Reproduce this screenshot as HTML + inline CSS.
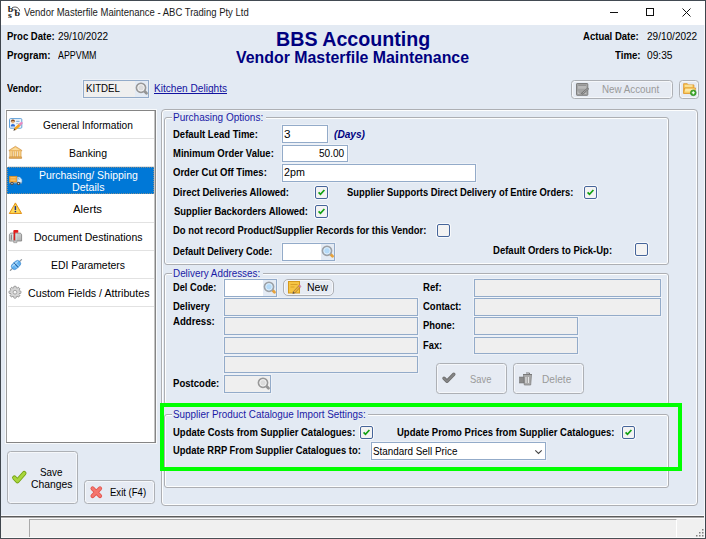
<!DOCTYPE html>
<html><head><meta charset="utf-8"><title>Vendor Masterfile Maintenance - ABC Trading Pty Ltd</title>
<style>
html,body{margin:0;padding:0;}
body{width:706px;height:539px;overflow:hidden;position:relative;background:#e3eaf3;font-family:"Liberation Sans",sans-serif;font-size:10.67px;color:#000;}
.a{position:absolute;box-sizing:border-box;}
.t{position:absolute;white-space:pre;transform-origin:0 50%;display:block;}
.inp{position:absolute;box-sizing:border-box;background:#fff;border:1px solid #93abc9;box-shadow:0 0 0 1px rgba(255,255,255,.35);}
.dis{background:#efefef;}
.cb{position:absolute;box-sizing:border-box;width:13px;height:13px;border:1px solid #45659a;border-radius:2px;background:#f3f3f3;box-shadow:0 0 0 1px rgba(255,255,255,.7);}
.grp{position:absolute;box-sizing:border-box;border:1px solid #adafb3;border-radius:3px;box-shadow:inset 0 0 0 1px rgba(255,255,255,.92);}
.leg{position:absolute;background:#e3eaf3;height:4px;}
.btn{position:absolute;box-sizing:border-box;border:1px solid #adb0b5;border-radius:3.500px;background:#e6ebf3;box-shadow:inset 0 0 0 1px rgba(255,255,255,.6);}
.row{position:absolute;left:8px;width:146px;height:1px;background:#e2e2e2;}
svg{position:absolute;overflow:visible;}
</style></head><body>
<!-- title bar -->
<div class="a" style="left:0;top:0;width:706px;height:25px;background:#fff;"></div>
<div class="a" style="left:0;top:0;width:706px;height:1px;background:#424a52;"></div>
<div class="a" style="left:0;top:0;width:1px;height:539px;background:#3f464d;"></div>
<div class="a" style="left:705px;top:0;width:1px;height:539px;background:#3f464d;"></div>
<div class="a" style="left:704px;top:25px;width:1px;height:491px;background:#f3f6fa;"></div>
<!-- app icon -->
<svg style="left:7px;top:5.700px" width="15" height="15" viewBox="0 0 15 15"><g font-family="Liberation Serif,serif" font-weight="bold" fill="#1a1a1a"><text transform="translate(0.800 6.400) scale(1.250 1)" font-size="8">b</text><text transform="translate(7.600 10.100) scale(1.250 1)" font-size="8">b</text><text transform="translate(1 12.400) scale(1.350 1)" font-size="7.400">s</text></g><path d="M5 1.900C8 0 12.200 1.400 12.700 5.200M6.200 4.100C8 3.200 9.400 3.700 10 4.700" fill="none" stroke="#2a2a2a" stroke-width=".800"/></svg>
<!-- caption buttons -->
<div class="a" style="left:610px;top:12px;width:8px;height:1px;background:#111;"></div>
<div class="a" style="left:646px;top:8px;width:8px;height:8px;border:1px solid #111;"></div>
<svg style="left:682px;top:8px" width="9" height="9" viewBox="0 0 9 9"><path d="M0.5 0.5L8.5 8.5M8.5 0.5L0.5 8.5" stroke="#111" stroke-width="1" fill="none"/></svg>

<!-- vendor input -->
<div class="inp dis" style="left:83px;top:80px;width:66px;height:18px;"></div>
<div class="a" style="left:135px;top:81px;width:13px;height:16px;background:#e4ebf4;"></div>
<svg style="left:135px;top:82px" width="14" height="14" viewBox="0 0 14 14"><path d="M9.800 9.600L11.500 11.300" stroke="#959595" stroke-width="2.800" stroke-linecap="round"/><circle cx="6" cy="5.800" r="4.500" fill="#dcdcdc" stroke="#989898" stroke-width="1.800"/><circle cx="6" cy="5.800" r="3.200" fill="none" stroke="#f4f4f4" stroke-width=".900"/></svg>

<!-- New Account button -->
<div class="btn" style="left:571px;top:80px;width:102px;height:19px;"></div>
<svg style="left:576px;top:83px" width="13" height="13" viewBox="0 0 13 13"><rect x="0.500" y="0.500" width="11.300" height="11.800" rx=".600" fill="#a3a3a3" stroke="#7f7f7f"/><rect x="2" y="2" width="8.300" height="3.700" fill="#b9b9b9"/><path d="M2.200 2.400h7.900" stroke="#8a8a8a" stroke-width=".900"/><path d="M2 8.500v2h1.500M10.300 10.500H8.800" stroke="#c9c9c9" stroke-width=".800" fill="none"/><path d="M5.600 11.100L12.400 5.300" stroke="#6e6e6e" stroke-width="2"/><path d="M6.400 10.400L12 5.700" stroke="#c4c4c4" stroke-width=".700"/></svg>
<div class="btn" style="left:679px;top:80px;width:20px;height:19px;"></div>
<svg style="left:682.500px;top:82.600px" width="14" height="13" viewBox="0 0 14 13"><path d="M0.600 0.700h3.700l1 1.200h5.600v8.400H0.600z" fill="#f4c24f" stroke="#df962a" stroke-width=".800" stroke-linejoin="round"/><path d="M1.700 2.400h7.800M1.700 3.700h7.800" stroke="#fdeeb5" stroke-width=".800"/><path d="M1.600 5h11.100l-1.600 5.300H0.600z" fill="#fbd772" stroke="#df962a" stroke-width=".800" stroke-linejoin="round"/><path d="M2.400 6.300h8.600M2 7.800h8" stroke="#fef3c6" stroke-width=".800"/><circle cx="10.300" cy="9.800" r="2.900" fill="#3aa82a" stroke="#2a8a1e" stroke-width=".600"/><path d="M10.300 8.300v3M8.800 9.800h3" stroke="#fff" stroke-width="1.100"/></svg>

<!-- left list -->
<div class="a" style="left:6px;top:110px;width:150px;height:333px;background:#fff;border:1px solid #858585;border-left-color:#9c9c9c;box-shadow:0 0 0 1px rgba(255,255,255,.75), inset -1px 0 0 #c4c4c4;"></div>
<div class="row" style="top:138px"></div>
<div class="row" style="top:166px"></div>
<div class="a" style="left:7px;top:167px;width:147px;height:27px;background:#0078d7;border:1px dotted rgba(214,160,100,.6);"></div>
<div class="row" style="top:222px"></div>
<div class="row" style="top:250px"></div>
<div class="row" style="top:278px"></div>
<div class="row" style="top:306px"></div>
<!-- list icons -->
<svg style="left:9px;top:118px" width="14" height="14" viewBox="0 0 14 14"><rect x="0.500" y="0.600" width="12.300" height="9.600" rx="1" fill="#eef5fc" stroke="#5f9fd8" stroke-width="1"/><circle cx="3.900" cy="3.700" r="1.700" fill="#ecba86"/><path d="M2.100 3.500a1.800 1.800 0 0 1 3.600 0c-.6-1-3-1-3.600 0z" fill="#7a3f14" stroke="#7a3f14" stroke-width=".500"/><path d="M1.700 8.400C1.700 5.300 6.100 5.300 6.100 8.400z" fill="#2f6fd6"/><path d="M7.200 3.300h3.300" stroke="#6f9fd0" stroke-width="1"/><path d="M7.200 5.600h2.400" stroke="#aab4be" stroke-width=".800"/><path d="M5.800 11.200L11 6.500" stroke="#f5a21e" stroke-width="2.500"/><path d="M5.200 10.500l1.500 1.600-2.300.700z" fill="#3a2a1a"/><path d="M10.500 7l1-.900" stroke="#b9bec4" stroke-width="2.500"/><path d="M11.300 6.200l1.200-1.100" stroke="#e889c2" stroke-width="2.500" stroke-linecap="round"/></svg>
<svg style="left:9px;top:146px" width="13" height="13" viewBox="0 0 13 13"><path d="M6.400 0.300L12.700 4.200V5.100H0.200V4.200z" fill="#f6c673" stroke="#c8883a" stroke-width=".600" stroke-linejoin="round"/><path d="M6.400 1.600L10.400 4.100H2.400z" fill="#fbdc9c"/><rect x="0.700" y="5.100" width="11.500" height="5.800" fill="#f5c36c"/><path d="M1.900 5.300v5.400M6.400 5.300v5.400M10.900 5.300v5.400" stroke="#fbe0a8" stroke-width="1"/><path d="M4.200 5.400v5.400M8.400 5.400v5.400" stroke="#fff" stroke-width="1.100"/><path d="M0.800 5.200v5.600M3.500 5.300v5.500M4.900 5.300v5.500M7.700 5.300v5.500M9.100 5.300v5.500M12 5.200v5.600" stroke="#cf9243" stroke-width=".500"/><path d="M0.300 10.900h12.300v1.500H0.300z" fill="#eeb55c" stroke="#c07f33" stroke-width=".600"/></svg>
<svg style="left:9px;top:176px" width="14" height="10" viewBox="0 0 14 10"><rect x="0.300" y="0.200" width="7.700" height="6.100" fill="#f5a32c" stroke="#e08a14" stroke-width=".500"/><path d="M1.500 1.500h5.200M1.500 3.100h5.200M1.500 4.600h5.200" stroke="#fbc876" stroke-width=".800"/><path d="M8.300 1.200h2.600l1.900 2.400v2.700H8.300z" fill="#dceefb" stroke="#9cc0e2" stroke-width=".500"/><path d="M9.200 1.900h1.500l1.300 1.700H9.200z" fill="#6fb2ee"/><path d="M10 1.700l1.600 2" stroke="#fff" stroke-width=".700"/><rect x="0.300" y="6.300" width="12.600" height="1.100" fill="#aab3bd"/><circle cx="3" cy="7.500" r="1.700" fill="#4a4a4a"/><circle cx="3" cy="7.500" r=".700" fill="#d8d8d8"/><circle cx="9.500" cy="7.500" r="1.700" fill="#4a4a4a"/><circle cx="9.500" cy="7.500" r=".700" fill="#d8d8d8"/></svg>
<svg style="left:9px;top:202.400px" width="14" height="12" viewBox="0 0 14 12"><path d="M6.400 0.900L12.600 11.500H0.300z" fill="#fbd03c" stroke="#e2921c" stroke-width="1" stroke-linejoin="round"/><path d="M6.400 3L10.800 10.500H2z" fill="#fde27a" opacity=".55"/><path d="M6.400 4.100v3.900" stroke="#1f2f80" stroke-width="1.500"/><circle cx="6.400" cy="9.500" r=".850" fill="#1f2f80"/></svg>
<svg style="left:9px;top:229px" width="14" height="15" viewBox="0 0 14 15"><defs><linearGradient id="mb" x1="0" y1="0" x2="1" y2="1"><stop offset="0" stop-color="#e6e6e6"/><stop offset="1" stop-color="#aeaeae"/></linearGradient></defs><path d="M0.400 12V6c0-1.100.900-1.900 1.900-1.900h8.400c1.100 0 1.900.900 1.900 1.900v6z" fill="url(#mb)" stroke="#7e7e7e" stroke-width=".800"/><path d="M2.300 5.600v5.200" stroke="#6e6e6e" stroke-width=".900"/><path d="M3.700 4.600v7M7.100 4.600v7" stroke="#c9eef0" stroke-width=".800"/><path d="M4.700 12v1.700h3.200V12" fill="#c4c4c4" stroke="#8a8a8a" stroke-width=".600"/><path d="M5.400 1.500v9.700" stroke="#d61f1f" stroke-width="1.700"/><rect x="4.600" y="0.900" width="4.700" height="2.900" rx=".800" fill="#e21d1d"/></svg>
<svg style="left:10px;top:259px" width="12" height="12" viewBox="0 0 12 12"><path d="M0.400 11.400L2.600 9.300M9.300 2.700l2.200-2.100" stroke="#8e979f" stroke-width="1.300" stroke-linecap="round"/><g transform="rotate(-42 6 6)"><rect x="0.900" y="2.900" width="10.200" height="6.200" rx="3.100" fill="#5fb0f0" stroke="#3f8ad0" stroke-width=".700"/><path d="M2.600 4.400h6.800" stroke="#b5defb" stroke-width="1.100" stroke-linecap="round"/><path d="M4.500 3.100v5.800M7.500 3.100v5.800" stroke="#a5d5f8" stroke-width=".700"/><path d="M6 2.900v6.200" stroke="#2f5f95" stroke-width=".900"/></g></svg>
<svg style="left:9px;top:286px" width="12" height="12" viewBox="0 0 12 12"><g transform="translate(6 6.200)"><g fill="#cfcfcf" stroke="#7e7e7e" stroke-width=".800"><rect x="-1.200" y="-5.900" width="2.400" height="11.800" rx=".500" transform="rotate(0)"/><rect x="-1.200" y="-5.900" width="2.400" height="11.800" rx=".500" transform="rotate(45)"/><rect x="-1.200" y="-5.900" width="2.400" height="11.800" rx=".500" transform="rotate(90)"/><rect x="-1.200" y="-5.900" width="2.400" height="11.800" rx=".500" transform="rotate(135)"/></g><circle r="4.300" fill="#dadada" stroke="#8e8e8e" stroke-width=".600"/><circle r="4" fill="#d6d6d6"/><g fill="#d6d6d6"><rect x="-.800" y="-5.400" width="1.600" height="10.800" transform="rotate(0)"/><rect x="-.800" y="-5.400" width="1.600" height="10.800" transform="rotate(45)"/><rect x="-.800" y="-5.400" width="1.600" height="10.800" transform="rotate(90)"/><rect x="-.800" y="-5.400" width="1.600" height="10.800" transform="rotate(135)"/></g><circle r="1.900" fill="#f4f4f4" stroke="#8a8a8a" stroke-width=".700"/></g></svg>

<!-- bottom-left buttons -->
<div class="btn" style="left:7px;top:451px;width:71px;height:53px;"></div>
<svg style="left:12px;top:470px" width="15" height="15" viewBox="0 0 15 15"><path d="M2.400 7.700L5.400 11 12.200 3.300" fill="none" stroke="#76a317" stroke-width="4.600" stroke-linecap="round" stroke-linejoin="round"/><path d="M2.400 7.700L5.400 11 12.200 3.300" fill="none" stroke="#a9d63c" stroke-width="2.800" stroke-linecap="round" stroke-linejoin="round"/></svg>
<div class="btn" style="left:84px;top:480px;width:71px;height:24px;"></div>
<svg style="left:90px;top:486px" width="13" height="13" viewBox="0 0 13 13"><path d="M2.600 2.500L10 9.900M10 2.500L2.600 9.900" fill="none" stroke="#e2534b" stroke-width="4.200" stroke-linecap="round"/><path d="M2.600 2.500L10 9.900M10 2.500L2.600 9.900" fill="none" stroke="#f4766e" stroke-width="2.600" stroke-linecap="round"/></svg>

<!-- right outer panel -->
<div class="grp" style="left:161px;top:109px;width:537px;height:397px;border-radius:4px;"></div>

<!-- group 1 -->
<div class="grp" style="left:164px;top:117px;width:505px;height:148px;"></div>
<div class="leg" style="left:172px;top:115px;width:94px;"></div>
<div class="inp" style="left:282px;top:125px;width:46px;height:18px;"></div>
<div class="inp" style="left:282px;top:145px;width:66px;height:17px;"></div>
<div class="inp" style="left:282px;top:164px;width:194px;height:18px;"></div>
<div class="cb" style="left:315px;top:186px;"></div>
<div class="cb" style="left:584px;top:186px;"></div>
<div class="cb" style="left:315px;top:205px;"></div>
<div class="cb" style="left:437px;top:224px;"></div>
<div class="cb" style="left:635px;top:243px;"></div>
<div class="inp" style="left:282px;top:243px;width:53px;height:18px;"></div>
<div class="a" style="left:321px;top:244px;width:13px;height:16px;background:#e4ebf4;"></div>
<svg style="left:321px;top:245px" width="14" height="14" viewBox="0 0 14 14"><path d="M9.800 9.600L11.500 11.300" stroke="#e6a23c" stroke-width="2.800" stroke-linecap="round"/><circle cx="6" cy="5.800" r="4.500" fill="#b4daf8" stroke="#9da1a6" stroke-width="1.800"/><circle cx="6" cy="5.800" r="3.200" fill="none" stroke="#e3f1fc" stroke-width=".900"/></svg>
<!-- checks -->
<svg style="left:318px;top:189px" width="7" height="7" viewBox="0 0 7 7"><path d="M0.600 3.300L2.500 5.300 6.400 1" stroke="#12a112" stroke-width="1.700" fill="none"/></svg>
<svg style="left:587px;top:189px" width="7" height="7" viewBox="0 0 7 7"><path d="M0.600 3.300L2.500 5.300 6.400 1" stroke="#12a112" stroke-width="1.700" fill="none"/></svg>
<svg style="left:318px;top:208px" width="7" height="7" viewBox="0 0 7 7"><path d="M0.600 3.300L2.500 5.300 6.400 1" stroke="#12a112" stroke-width="1.700" fill="none"/></svg>

<!-- group 2 -->
<div class="grp" style="left:164px;top:273px;width:505px;height:132px;"></div>
<div class="leg" style="left:172px;top:271px;width:91px;"></div>
<div class="inp" style="left:224px;top:279px;width:53px;height:18px;"></div>
<div class="a" style="left:263px;top:280px;width:13px;height:16px;background:#e4ebf4;"></div>
<svg style="left:263px;top:281px" width="14" height="14" viewBox="0 0 14 14"><path d="M9.800 9.600L11.500 11.300" stroke="#e6a23c" stroke-width="2.800" stroke-linecap="round"/><circle cx="6" cy="5.800" r="4.500" fill="#b4daf8" stroke="#9da1a6" stroke-width="1.800"/><circle cx="6" cy="5.800" r="3.200" fill="none" stroke="#e3f1fc" stroke-width=".900"/></svg>
<div class="btn" style="left:283px;top:279px;width:51px;height:17px;border-radius:5px;"></div>
<svg style="left:288px;top:281px" width="14" height="13" viewBox="0 0 14 13"><rect x="0.500" y="0.500" width="11" height="11.500" fill="#f6c544" stroke="#d59a1f"/><path d="M2.500 3.500h7M2.500 6h4" stroke="#d9a12a"/><path d="M5.300 10.600L10.600 5l1.500 1.400L6.800 12l-2 .6z" fill="#f2b33a" stroke="#8a6a3a" stroke-width=".6"/><path d="M10.600 5l1-1.100 1.500 1.400-1 1.100z" fill="#ea86b8" stroke="#a85a86" stroke-width=".4"/><path d="M4.800 12.600l.5-2 1.500 1.400z" fill="#555"/></svg>
<div class="inp dis" style="left:224px;top:298px;width:194px;height:18px;"></div>
<div class="inp dis" style="left:224px;top:317px;width:194px;height:18px;"></div>
<div class="inp dis" style="left:224px;top:337px;width:194px;height:17px;"></div>
<div class="inp dis" style="left:224px;top:356px;width:194px;height:17px;"></div>
<div class="inp dis" style="left:224px;top:375px;width:47px;height:18px;"></div>
<svg style="left:257px;top:377px" width="14" height="14" viewBox="0 0 14 14"><path d="M9.800 9.600L11.500 11.300" stroke="#959595" stroke-width="2.800" stroke-linecap="round"/><circle cx="6" cy="5.800" r="4.500" fill="#dcdcdc" stroke="#989898" stroke-width="1.800"/><circle cx="6" cy="5.800" r="3.200" fill="none" stroke="#f4f4f4" stroke-width=".900"/></svg>
<div class="inp dis" style="left:474px;top:279px;width:187px;height:18px;"></div>
<div class="inp dis" style="left:474px;top:298px;width:187px;height:18px;"></div>
<div class="inp dis" style="left:474px;top:317px;width:104px;height:18px;"></div>
<div class="inp dis" style="left:474px;top:337px;width:104px;height:17px;"></div>
<div class="btn" style="left:436px;top:363px;width:71px;height:31px;"></div>
<svg style="left:442px;top:372px" width="14" height="12" viewBox="0 0 14 12"><path d="M2 6.300L5 9.300 11.800 2.300" fill="none" stroke="#6f6f6f" stroke-width="3.400" stroke-linecap="round" stroke-linejoin="round"/><path d="M2 6.300L5 9.300 11.800 2.300" fill="none" stroke="#858585" stroke-width="1.800" stroke-linecap="round" stroke-linejoin="round"/></svg>
<div class="btn" style="left:513px;top:363px;width:71px;height:31px;"></div>
<svg style="left:519px;top:371.500px" width="14" height="14" viewBox="0 0 14 14"><path d="M4.500 2.500h8l-.8 10.500H5.300z" fill="#a9a9a9" stroke="#7a7a7a" stroke-width=".7"/><path d="M4 2.500h9M7 1h3.500v1.500" stroke="#7a7a7a" fill="none"/><path d="M7 5v6M9.500 5v6" stroke="#e6e6e6"/><rect x="0.500" y="5" width="4.500" height="6" fill="#8a8a8a" stroke="#6a6a6a" stroke-width=".5"/></svg>

<!-- group 3 -->
<div class="grp" style="left:164px;top:414px;width:505px;height:74px;"></div>
<div class="leg" style="left:172px;top:412px;width:196px;"></div>
<div class="cb" style="left:360px;top:426px;"></div>
<div class="cb" style="left:622px;top:426px;"></div>
<svg style="left:363px;top:429px" width="7" height="7" viewBox="0 0 7 7"><path d="M0.600 3.300L2.500 5.300 6.400 1" stroke="#12a112" stroke-width="1.700" fill="none"/></svg>
<svg style="left:625px;top:429px" width="7" height="7" viewBox="0 0 7 7"><path d="M0.600 3.300L2.500 5.300 6.400 1" stroke="#12a112" stroke-width="1.700" fill="none"/></svg>
<div class="inp" style="left:371px;top:442px;width:175px;height:18px;"></div>
<svg style="left:535px;top:449.800px" width="7" height="4" viewBox="0 0 7 4"><path d="M0.300 0.300L3.500 3.500 6.700 0.300" stroke="#444" stroke-width="1.100" fill="none"/></svg>

<!-- green highlight -->
<div class="a" style="left:160px;top:403px;width:522px;height:68px;border:4px solid #00ff00;"></div>

<!-- status bar -->
<div class="a" style="left:1px;top:515px;width:704px;height:1px;background:#f9fafc;"></div>
<div class="a" style="left:1px;top:516px;width:704px;height:1px;background:#5c5c5c;"></div>
<div class="a" style="left:1px;top:517px;width:704px;height:1px;background:#a9a9a9;"></div>
<div class="a" style="left:1px;top:518px;width:704px;height:20px;background:#f0f0f0;"></div>
<div class="a" style="left:1px;top:518px;width:704px;height:1px;background:#fbfbfb;"></div>
<div class="a" style="left:1px;top:537px;width:704px;height:1px;background:#fafafa;"></div>
<div class="a" style="left:29px;top:519px;width:648px;height:18px;border-top:1px solid #a9a9a9;border-left:1px solid #a9a9a9;border-right:1px solid #fff;"></div>
<div class="a" style="left:704px;top:25px;width:1px;height:513px;background:#f6f8fb;"></div>
<svg style="left:694.600px;top:527.600px" width="10" height="10" viewBox="0 0 10 10"><g fill="#7f7f7f"><rect x="7" y="1" width="1.500" height="1.500"/><rect x="4" y="4" width="1.500" height="1.500"/><rect x="7" y="4" width="1.500" height="1.500"/><rect x="1" y="7" width="1.500" height="1.500"/><rect x="4" y="7" width="1.500" height="1.500"/><rect x="7" y="7" width="1.500" height="1.500"/></g></svg>
<div class="a" style="left:0;top:538px;width:706px;height:1px;background:#4a4f55;"></div>

<span class="t" style="left:23.7px;top:5.5px;line-height:14px;font-size:10px;transform:scaleX(0.9489);color:#1a1a1a;">Vendor Masterfile Maintenance - ABC Trading Pty Ltd</span>
<span class="t" style="left:6.9px;top:29.5px;line-height:14px;font-size:10.0px;transform:scaleX(0.9537);font-weight:bold;">Proc Date:</span>
<span class="t" style="left:57.9px;top:29.5px;line-height:14px;font-size:10.0px;transform:scaleX(0.9988);">29/10/2022</span>
<span class="t" style="left:6.9px;top:48.5px;line-height:14px;font-size:10.0px;transform:scaleX(0.9786);font-weight:bold;">Program:</span>
<span class="t" style="left:57.9px;top:48.5px;line-height:14px;font-size:10.0px;transform:scaleX(0.8882);">APPVMM</span>
<span class="t" style="left:6.9px;top:81.5px;line-height:14px;font-size:10.0px;transform:scaleX(0.9400);font-weight:bold;">Vendor:</span>
<span class="t" style="left:86.0px;top:81.5px;line-height:14px;font-size:10.0px;transform:scaleX(0.9710);">KITDEL</span>
<span class="t" style="left:153.9px;top:81.5px;line-height:14px;font-size:10.0px;transform:scaleX(1.0102);color:#1212a0;text-decoration:underline;text-decoration-thickness:1px;text-decoration-skip-ink:none;text-underline-offset:1px;">Kitchen Delights</span>
<span class="t" style="left:276.3px;top:26.7px;line-height:25px;font-size:19.5px;transform:scaleX(1.0078);font-weight:bold;color:#000080;">BBS Accounting</span>
<span class="t" style="left:236.4px;top:47.0px;line-height:21px;font-size:16px;transform:scaleX(0.9926);font-weight:bold;color:#000080;">Vendor Masterfile Maintenance</span>
<span class="t" style="left:582.6px;top:29.5px;line-height:14px;font-size:10.0px;transform:scaleX(0.9561);font-weight:bold;">Actual Date:</span>
<span class="t" style="left:646.9px;top:29.5px;line-height:14px;font-size:10.0px;transform:scaleX(1.0027);">29/10/2022</span>
<span class="t" style="left:614.9px;top:48.5px;line-height:14px;font-size:10.0px;transform:scaleX(0.9623);font-weight:bold;">Time:</span>
<span class="t" style="left:646.9px;top:48.5px;line-height:14px;font-size:10.0px;transform:scaleX(1.0187);">09:35</span>
<span class="t" style="left:601.9px;top:81.8px;line-height:15px;font-size:10.67px;transform:scaleX(0.9196);color:#9a9a9a;">New Account</span>
<span class="t" style="left:42.9px;top:117.1px;line-height:16px;font-size:11.3px;transform:scaleX(0.9004);">General Information</span>
<span class="t" style="left:68.9px;top:145.1px;line-height:16px;font-size:11.3px;transform:scaleX(0.9307);">Banking</span>
<span class="t" style="left:39.1px;top:167.1px;line-height:16px;font-size:11.3px;transform:scaleX(0.9254);color:#fff;">Purchasing/ Shipping</span>
<span class="t" style="left:71.9px;top:179.1px;line-height:16px;font-size:11.3px;transform:scaleX(0.9412);color:#fff;">Details</span>
<span class="t" style="left:72.9px;top:201.1px;line-height:16px;font-size:11.3px;transform:scaleX(1.0038);">Alerts</span>
<span class="t" style="left:33.9px;top:229.1px;line-height:16px;font-size:11.3px;transform:scaleX(0.9290);">Document Destinations</span>
<span class="t" style="left:50.9px;top:257.1px;line-height:16px;font-size:11.3px;transform:scaleX(0.9209);">EDI Parameters</span>
<span class="t" style="left:27.6px;top:285.1px;line-height:16px;font-size:11.3px;transform:scaleX(0.9439);">Custom Fields / Attributes</span>
<span class="t" style="left:173.2px;top:110.5px;line-height:14px;font-size:10.0px;transform:scaleX(1.0015);color:#1a1aa6;">Purchasing Options:</span>
<span class="t" style="left:173.1px;top:127.5px;line-height:14px;font-size:10.0px;transform:scaleX(0.9498);font-weight:bold;">Default Lead Time:</span>
<span class="t" style="left:284.4px;top:127.5px;line-height:14px;font-size:10.0px;transform:scaleX(1.1685);">3</span>
<span class="t" style="left:333.5px;top:127.5px;line-height:14px;font-size:10.0px;transform:scaleX(1.0138);font-weight:bold;color:#000080;font-style:italic;">(Days)</span>
<span class="t" style="left:173.1px;top:146.5px;line-height:14px;font-size:10.0px;transform:scaleX(0.9497);font-weight:bold;">Minimum Order Value:</span>
<span class="t" style="left:319.2px;top:146.5px;line-height:14px;font-size:10.0px;transform:scaleX(1.0067);">50.00</span>
<span class="t" style="left:173.1px;top:165.5px;line-height:14px;font-size:10.0px;transform:scaleX(0.9502);font-weight:bold;">Order Cut Off Times:</span>
<span class="t" style="left:284.4px;top:165.5px;line-height:14px;font-size:10.0px;transform:scaleX(1.0692);">2pm</span>
<span class="t" style="left:173.1px;top:185.5px;line-height:14px;font-size:10.0px;transform:scaleX(0.9473);font-weight:bold;">Direct Deliveries Allowed:</span>
<span class="t" style="left:347.1px;top:185.5px;line-height:14px;font-size:10.0px;transform:scaleX(0.9362);font-weight:bold;">Supplier Supports Direct Delivery of Entire Orders:</span>
<span class="t" style="left:174.4px;top:204.5px;line-height:14px;font-size:10.0px;transform:scaleX(0.9444);font-weight:bold;">Supplier Backorders Allowed:</span>
<span class="t" style="left:173.1px;top:223.5px;line-height:14px;font-size:10.0px;transform:scaleX(0.9439);font-weight:bold;">Do not record Product/Supplier Records for this Vendor:</span>
<span class="t" style="left:173.1px;top:244.5px;line-height:14px;font-size:10.0px;transform:scaleX(0.9306);font-weight:bold;">Default Delivery Code:</span>
<span class="t" style="left:493.0px;top:243.5px;line-height:14px;font-size:10.0px;transform:scaleX(0.9526);font-weight:bold;">Default Orders to Pick-Up:</span>
<span class="t" style="left:173.2px;top:266.5px;line-height:14px;font-size:10.0px;transform:scaleX(0.9867);color:#1a1aa6;">Delivery Addresses:</span>
<span class="t" style="left:173.1px;top:280.5px;line-height:14px;font-size:10.0px;transform:scaleX(0.9278);font-weight:bold;">Del Code:</span>
<span class="t" style="left:307.0px;top:279.8px;line-height:15px;font-size:10.67px;transform:scaleX(0.9846);">New</span>
<span class="t" style="left:173.1px;top:299.5px;line-height:14px;font-size:10.0px;transform:scaleX(0.9455);font-weight:bold;">Delivery</span>
<span class="t" style="left:173.1px;top:314.5px;line-height:14px;font-size:10.0px;transform:scaleX(0.9640);font-weight:bold;">Address:</span>
<span class="t" style="left:173.1px;top:376.5px;line-height:14px;font-size:10.0px;transform:scaleX(0.9577);font-weight:bold;">Postcode:</span>
<span class="t" style="left:422.8px;top:280.5px;line-height:14px;font-size:10.0px;transform:scaleX(0.9561);font-weight:bold;">Ref:</span>
<span class="t" style="left:422.9px;top:299.5px;line-height:14px;font-size:10.0px;transform:scaleX(0.9492);font-weight:bold;">Contact:</span>
<span class="t" style="left:422.9px;top:318.5px;line-height:14px;font-size:10.0px;transform:scaleX(0.9442);font-weight:bold;">Phone:</span>
<span class="t" style="left:422.9px;top:338.5px;line-height:14px;font-size:10.0px;transform:scaleX(0.9337);font-weight:bold;">Fax:</span>
<span class="t" style="left:469.8px;top:371.8px;line-height:15px;font-size:10.67px;transform:scaleX(0.8808);color:#9a9a9a;">Save</span>
<span class="t" style="left:542.1px;top:371.8px;line-height:15px;font-size:10.67px;transform:scaleX(0.9509);color:#9a9a9a;">Delete</span>
<span class="t" style="left:173.2px;top:407.5px;line-height:14px;font-size:10.0px;transform:scaleX(0.9877);color:#1a1aa6;">Supplier Product Catalogue Import Settings:</span>
<span class="t" style="left:173.1px;top:425.5px;line-height:14px;font-size:10.0px;transform:scaleX(0.9482);font-weight:bold;">Update Costs from Supplier Catalogues:</span>
<span class="t" style="left:397.4px;top:425.5px;line-height:14px;font-size:10.0px;transform:scaleX(0.9500);font-weight:bold;">Update Promo Prices from Supplier Catalogues:</span>
<span class="t" style="left:173.1px;top:443.5px;line-height:14px;font-size:10.0px;transform:scaleX(0.9372);font-weight:bold;">Update RRP From Supplier Catalogues to:</span>
<span class="t" style="left:373.2px;top:444.5px;line-height:14px;font-size:10.0px;transform:scaleX(0.9859);">Standard Sell Price</span>
<span class="t" style="left:40.4px;top:464.8px;line-height:15px;font-size:10.67px;transform:scaleX(0.9260);">Save</span>
<span class="t" style="left:30.9px;top:476.8px;line-height:15px;font-size:10.67px;transform:scaleX(0.9729);">Changes</span>
<span class="t" style="left:110.3px;top:484.8px;line-height:15px;font-size:10.67px;transform:scaleX(0.8965);">Exit (F4)</span>
</body></html>
